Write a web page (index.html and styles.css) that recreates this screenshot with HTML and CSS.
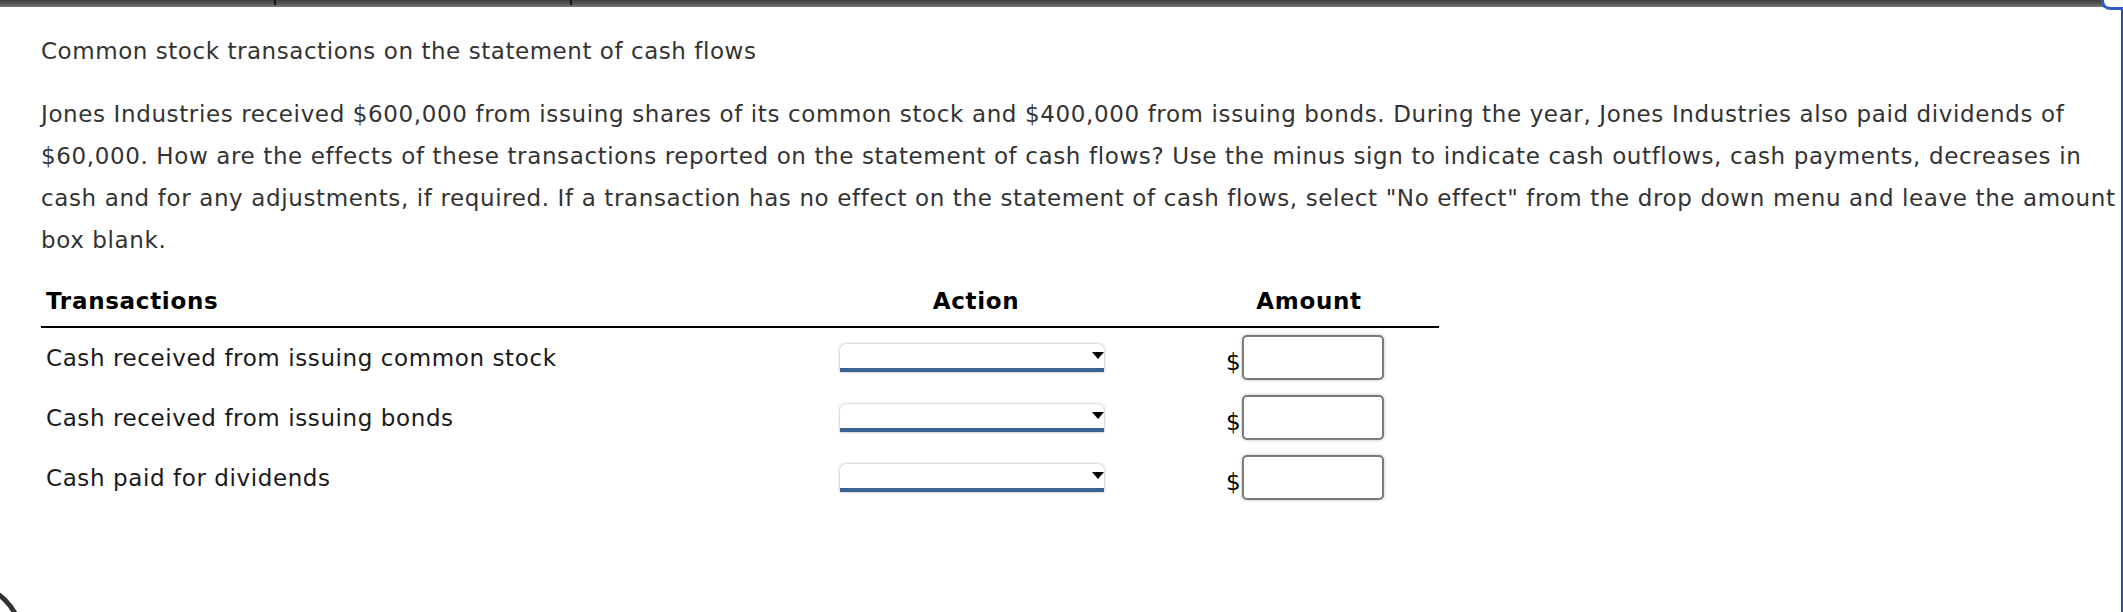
FILE: index.html
```html
<!DOCTYPE html>
<html lang="en">
<head>
<meta charset="utf-8">
<title>Common stock transactions on the statement of cash flows</title>
<link rel="stylesheet" href="styles.css">
</head>
<body>
<div class="page">
  <div class="topbar">
    <span class="tick tick-a"></span>
    <span class="tick tick-b"></span>
  </div>
  <div class="corner-frame"></div>
  <div class="right-rule"></div>

  <main class="content">
    <h1 class="title">Common stock transactions on the statement of cash flows</h1>
    <p class="question">Jones Industries received $600,000 from issuing shares of its common stock and $400,000 from issuing bonds. During the year, Jones Industries also paid dividends of $60,000. How are the effects of these transactions reported on the statement of cash flows? Use the minus sign to indicate cash outflows, cash payments, decreases in cash and for any adjustments, if required. If a transaction has no effect on the statement of cash flows, select "No effect" from the drop down menu and leave the amount box blank.</p>

    <div class="grid">
      <div class="head head-left">Transactions</div>
      <div class="head head-center">Action</div>
      <div class="head head-amount">Amount</div>

      <div class="cell label">Cash received from issuing common stock</div>
      <div class="cell center"><div class="dropdown"><select aria-label="Action"><option></option></select><span class="arrow"></span></div></div>
      <div class="cell amount"><span class="dollar">$</span><input class="amount-box" type="text" aria-label="Amount"></div>

      <div class="cell label">Cash received from issuing bonds</div>
      <div class="cell center"><div class="dropdown"><select aria-label="Action"><option></option></select><span class="arrow"></span></div></div>
      <div class="cell amount"><span class="dollar">$</span><input class="amount-box" type="text" aria-label="Amount"></div>

      <div class="cell label">Cash paid for dividends</div>
      <div class="cell center"><div class="dropdown"><select aria-label="Action"><option></option></select><span class="arrow"></span></div></div>
      <div class="cell amount"><span class="dollar">$</span><input class="amount-box" type="text" aria-label="Amount"></div>
    </div>
  </main>

  <div class="corner-ring"></div>
</div>
</body>
</html>
```

FILE: styles.css
```css
* { box-sizing: border-box; }

html, body {
  margin: 0;
  padding: 0;
  background: #ffffff;
  overflow: hidden;
}

.page {
  width: 2123px;
  height: 612px;
  overflow: hidden;
  position: relative;
  font-family: "DejaVu Sans", Verdana, sans-serif;
  font-size: 23px;
  letter-spacing: 0.6px;
  color: #333333;
}

/* top chrome bar */
.topbar {
  height: 7px;
  width: 2104px;
  background: linear-gradient(#3e3e3e, #5a5a5a 60%, #7a7a7a);
  position: relative;
}
.tick {
  position: absolute;
  top: 0;
  width: 2px;
  height: 5px;
  background: #111;
}
.tick-a { left: 274px; }
.tick-b { left: 570px; }

.corner-frame {
  position: absolute;
  top: -6px;
  left: 2101px;
  width: 40px;
  height: 16px;
  background: #fff;
  border-left: 3px solid #2d5fc6;
  border-bottom: 3px solid #2d5fc6;
  border-bottom-left-radius: 9px;
}
.right-rule {
  position: absolute;
  top: 9px;
  bottom: 0;
  right: 0;
  width: 2px;
  background: #2c4f9e;
}

.content {
  padding: 0 6px 0 41px;
}

.title {
  margin: 31px 0 0 0;
  font-size: 23px;
  font-weight: normal;
  letter-spacing: 0.55px;
  line-height: 27px;
  color: #333333;
}

.question {
  margin: 28px 0 0 0;
  line-height: 42px;
  letter-spacing: 0.62px;
  color: #333333;
}

.grid {
  margin-top: 27px;
  width: 1398px;
  display: grid;
  grid-template-columns: 724px 414px 260px;
  grid-auto-rows: 60px;
  grid-template-rows: 40px;
  color: #1a1a1a;
}

.head {
  font-weight: bold;
  letter-spacing: 0.7px;
  color: #000;
  line-height: 27px;
  padding-bottom: 11px;
  border-bottom: 2px solid #000;
}
.head-left { padding-left: 5px; }
.head-center { text-align: center; padding-left: 8px; }
.head-amount { text-align: center; }

.cell {
  display: flex;
  align-items: center;
}
.label { padding-left: 5px; line-height: 27px; }
.center { justify-content: center; }
.amount { justify-content: center; padding-right: 8px; }

.dropdown {
  position: relative;
  width: 264px;
  height: 28px;
  background: #fff;
  border-radius: 6px 6px 0 0;
  box-shadow: 0 0 3px rgba(0, 0, 0, 0.35);
  border-bottom: 4px solid #3d6491;
}
.dropdown select {
  appearance: none;
  -webkit-appearance: none;
  border: 0;
  background: transparent;
  width: 100%;
  height: 100%;
  font: inherit;
  outline: none;
}
.arrow {
  position: absolute;
  right: 0;
  top: 8px;
  width: 0;
  height: 0;
  border-left: 6px solid transparent;
  border-right: 6px solid transparent;
  border-top: 7px solid #000;
}

.dollar {
  color: #000;
  font-size: 23px;
  line-height: 27px;
  margin-top: 8px;
  margin-right: 1px;
}
.amount-box {
  width: 142px;
  height: 45px;
  margin-top: -2px;
  border: 2px solid #7a7a7a;
  border-radius: 5px;
  box-shadow: 0 0 3px rgba(0, 0, 0, 0.3);
  background: #fff;
  font: inherit;
  padding: 0 6px;
}

.corner-ring {
  position: absolute;
  left: -94px;
  top: 581px;
  width: 118px;
  height: 118px;
  border: 5px solid #333;
  border-radius: 50%;
}
```
